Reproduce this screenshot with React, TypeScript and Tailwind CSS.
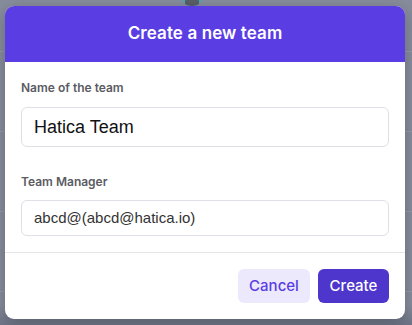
import React from "react";

export default function App() {
  return (
    <div
      className="relative w-[412px] h-[325px] overflow-hidden bg-[#878d9c]"
      style={{ fontFamily: "Inter, 'Noto Sans', sans-serif" }}
    >
      {/* dimmed background content */}
      <div className="flex flex-col">
        <div className="h-[52px] border-b border-[#959aa8]" />
        <div className="h-[80px] border-b border-[#959aa8]" />
        <div className="h-[80px] border-b border-[#959aa8]" />
        <div className="h-[80px] border-b border-[#959aa8]" />
      </div>
      <div className="absolute left-[179px] top-[-20px] w-[26px] h-[26px] rounded-full bg-[#5f9fae] flex items-end justify-center overflow-hidden">
        <div className="w-[14px] h-[10px] rounded-t-md bg-[#5a5e66]" />
      </div>
      <div className="absolute inset-x-0 bottom-0 h-[20px] bg-gradient-to-b from-transparent to-[#6f7587]" />

      {/* modal */}
      <div className="absolute left-[5px] top-[6px] w-[400px] h-[313px] rounded-[9px] bg-white overflow-hidden shadow-[0_4px_16px_rgba(0,0,0,0.25)] flex flex-col">
        <div className="h-14 bg-[#5a3de3] flex items-center justify-center">
          <span className="text-white text-[17px] font-semibold tracking-[0.1px]">
            Create a new team
          </span>
        </div>
        <div className="px-4 pt-[18px] pb-4 border-b border-[#e6e6ea] flex flex-col">
          <label className="text-[12px] leading-4 font-semibold text-[#5b5b63]">
            Name of the team
          </label>
          <div
            className="mt-[11px] h-10 rounded-md border border-[#dfdfe6] flex items-center px-3 text-[18px] text-[#111]"
            style={{ fontFamily: "'Liberation Sans', Arial, sans-serif" }}
          >
            Hatica Team
          </div>
          <label className="mt-[27px] text-[12px] leading-4 font-semibold text-[#5b5b63]">
            Team Manager
          </label>
          <div
            className="mt-[10px] h-9 rounded-md border border-[#dfdfe6] flex items-center px-3 text-[15px] text-[#333]"
            style={{ fontFamily: "'Liberation Sans', Arial, sans-serif" }}
          >
            abcd@(abcd@hatica.io)
          </div>
        </div>
        <div className="px-4 pt-4 flex justify-end gap-2">
          <button className="h-[34px] w-[72px] rounded-md bg-[#ece9fc] text-[#5a3de3] text-[15px] font-medium">
            Cancel
          </button>
          <button className="h-[34px] w-[71px] rounded-md bg-[#4e35cc] text-white text-[15px] font-medium">
            Create
          </button>
        </div>
      </div>
    </div>
  );
}
